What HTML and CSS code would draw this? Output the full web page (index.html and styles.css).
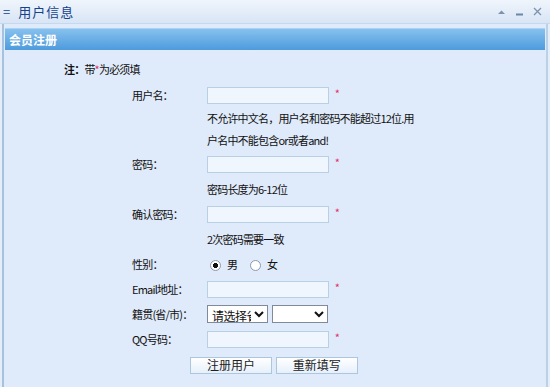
FILE: index.html
```html
<!DOCTYPE html>
<html lang="zh-CN">
<head>
    <meta charset="UTF-8">
    <title>用户信息</title>
    <link rel="stylesheet" href="styles.css">
</head>
<body>
    <div class="window">
        <div class="title-bar">
            <span class="title"><span class="grip">=</span>用户信息</span>
            <span class="tools">
                <svg width="9" height="6" viewBox="0 0 9 6"><path d="M1 5 L4.5 1.5 L8 5 Z" fill="#7d93ad"/></svg>
                <svg width="9" height="8" viewBox="0 0 9 8"><path d="M1 6.5 H8" stroke="#6f87a4" stroke-width="2"/></svg>
                <svg width="9" height="9" viewBox="0 0 9 9"><path d="M1 1 L8 8 M8 1 L1 8" stroke="#7d93ad" stroke-width="1.3"/></svg>
            </span>
        </div>

        <div class="panel">
            <div class="panel-head">会员注册</div>
            <div class="panel-body">
                <p class="note"><b>注：</b>带<span class="star">*</span>为必须填</p>
                <form id="regForm">
                    <table class="reg">
                        <tr>
                            <td class="label">用户名：</td>
                            <td><input type="text" name="username"> <span class="star">*</span></td>
                        </tr>
                        <tr>
                            <td></td>
                            <td class="hint wide">不允许中文名，用户名和密码不能超过12位.用户名中不能包含or或者and!</td>
                        </tr>
                        <tr>
                            <td class="label">密码：</td>
                            <td><input type="password" name="pwd"> <span class="star">*</span></td>
                        </tr>
                        <tr>
                            <td></td>
                            <td class="hint">密码长度为6-12位</td>
                        </tr>
                        <tr>
                            <td class="label">确认密码：</td>
                            <td><input type="password" name="pwd2"> <span class="star">*</span></td>
                        </tr>
                        <tr>
                            <td></td>
                            <td class="hint">2次密码需要一致</td>
                        </tr>
                        <tr>
                            <td class="label">性别：</td>
                            <td class="sex">
                                <label><input type="radio" name="sex" checked>男</label>
                                <label><input type="radio" name="sex">女</label>
                            </td>
                        </tr>
                        <tr>
                            <td class="label">Email地址：</td>
                            <td><input type="text" name="email"> <span class="star">*</span></td>
                        </tr>
                        <tr>
                            <td class="label">籍贯(省/市)：</td>
                            <td>
                                <select class="prov"><option>请选择省份</option></select>
                                <select class="city"><option></option></select>
                            </td>
                        </tr>
                        <tr>
                            <td class="label">QQ号码：</td>
                            <td><input type="text" name="qq"> <span class="star">*</span></td>
                        </tr>
                        <tr class="btn-row">
                            <td colspan="2">
                                <button type="submit" class="btn">注册用户</button>
                                <button type="reset" class="btn">重新填写</button>
                            </td>
                        </tr>
                    </table>
                </form>
            </div>
        </div>
    </div>
</body>
</html>
```

FILE: styles.css
```css
:root {
    --title-color: #15428b;
    --body-bg: #dfeafa;
    --input-border: #b9cfe3;
    --star: #e0306a;
}

html, body {
    margin: 0;
    padding: 0;
    height: 100%;
}

body {
    font-family: "Noto Sans CJK SC", "DejaVu Sans", sans-serif;
    font-size: 11px;
    letter-spacing: -0.8px;
    color: #111;
    background: #e4eefa;
}

.window {
    display: flex;
    flex-direction: column;
    height: 100vh;
}

.title-bar {
    height: 24px;
    flex: none;
    display: flex;
    align-items: center;
    justify-content: space-between;
    background: linear-gradient(#f0f5fc, #d8e5f5);
    border-bottom: 1px solid #c6d8ee;
    box-sizing: border-box;
    padding: 0 8px 0 3px;
}

.title {
    color: var(--title-color);
    font-size: 13px;
    letter-spacing: 1px;
}

.grip {
    margin-right: 7px;
}

.tools {
    display: flex;
    align-items: center;
    gap: 9px;
}

.tools svg {
    display: block;
}

.panel {
    flex: 1;
    display: flex;
    flex-direction: column;
    margin: 0 2px;
    border-left: 2px solid #a8c1dc;
    border-right: 2px solid #bcd0e6;
    padding: 4px 1px 0;
    background: var(--body-bg);
}

.panel-head {
    height: 22px;
    line-height: 22px;
    padding-left: 4px;
    color: #fff;
    font-size: 12px;
    letter-spacing: 0;
    font-weight: bold;
    background: linear-gradient(#86c1ee, #4d9bdc);
    border-top: 1px solid #a9d2f3;
    box-sizing: border-box;
}

.panel-body {
    flex: 1;
    padding-top: 7px;
}

.note {
    margin: 0;
    height: 25px;
    line-height: 25px;
    padding-left: 59px;
}

.star {
    color: var(--star);
    font-size: 11px;
}

.reg {
    margin-left: 127px;
    border-collapse: collapse;
}

.reg td {
    padding: 0;
    height: 25px;
}

.reg .label {
    width: 75px;
}

.reg input[type="text"],
.reg input[type="password"] {
    width: 122px;
    height: 17px;
    box-sizing: border-box;
    border: 1px solid var(--input-border);
    background: #eff6fe;
    vertical-align: middle;
    margin: 0 4px 0 0;
    padding: 0 2px;
}

.hint {
    line-height: 22px;
}

.hint.wide {
    width: 212px;
    height: 44px;
}

.sex label {
    margin-right: 8px;
}

.sex input[type="radio"] {
    appearance: none;
    -webkit-appearance: none;
    width: 11px;
    height: 11px;
    margin: 0 6px 0 3px;
    border: 1px solid #8e9aa8;
    border-radius: 50%;
    background: #fff;
    vertical-align: -2px;
    box-sizing: border-box;
}

.sex input[type="radio"]:checked {
    background: radial-gradient(circle, #111 0 2.3px, #fff 2.8px);
}

select {
    height: 18px;
    font-family: inherit;
    font-size: 12px;
    letter-spacing: -0.5px;
    color: #111;
    border: 1px solid #7f8b98;
    background: #fff;
    padding: 0;
    margin: 0;
    vertical-align: middle;
}

.prov {
    width: 61px;
}

.city {
    width: 56px;
    margin-left: 2px;
}

.btn-row td {
    height: 28px;
    padding-left: 58px;
}

.btn {
    width: 82px;
    height: 17px;
    margin-right: 2px;
    font-family: inherit;
    font-size: 12px;
    letter-spacing: 0;
    line-height: 14px;
    color: #222;
    border: 1px solid #adc6df;
    background: linear-gradient(#ffffff, #e6f0fb);
    padding: 0;
    cursor: pointer;
}
```
